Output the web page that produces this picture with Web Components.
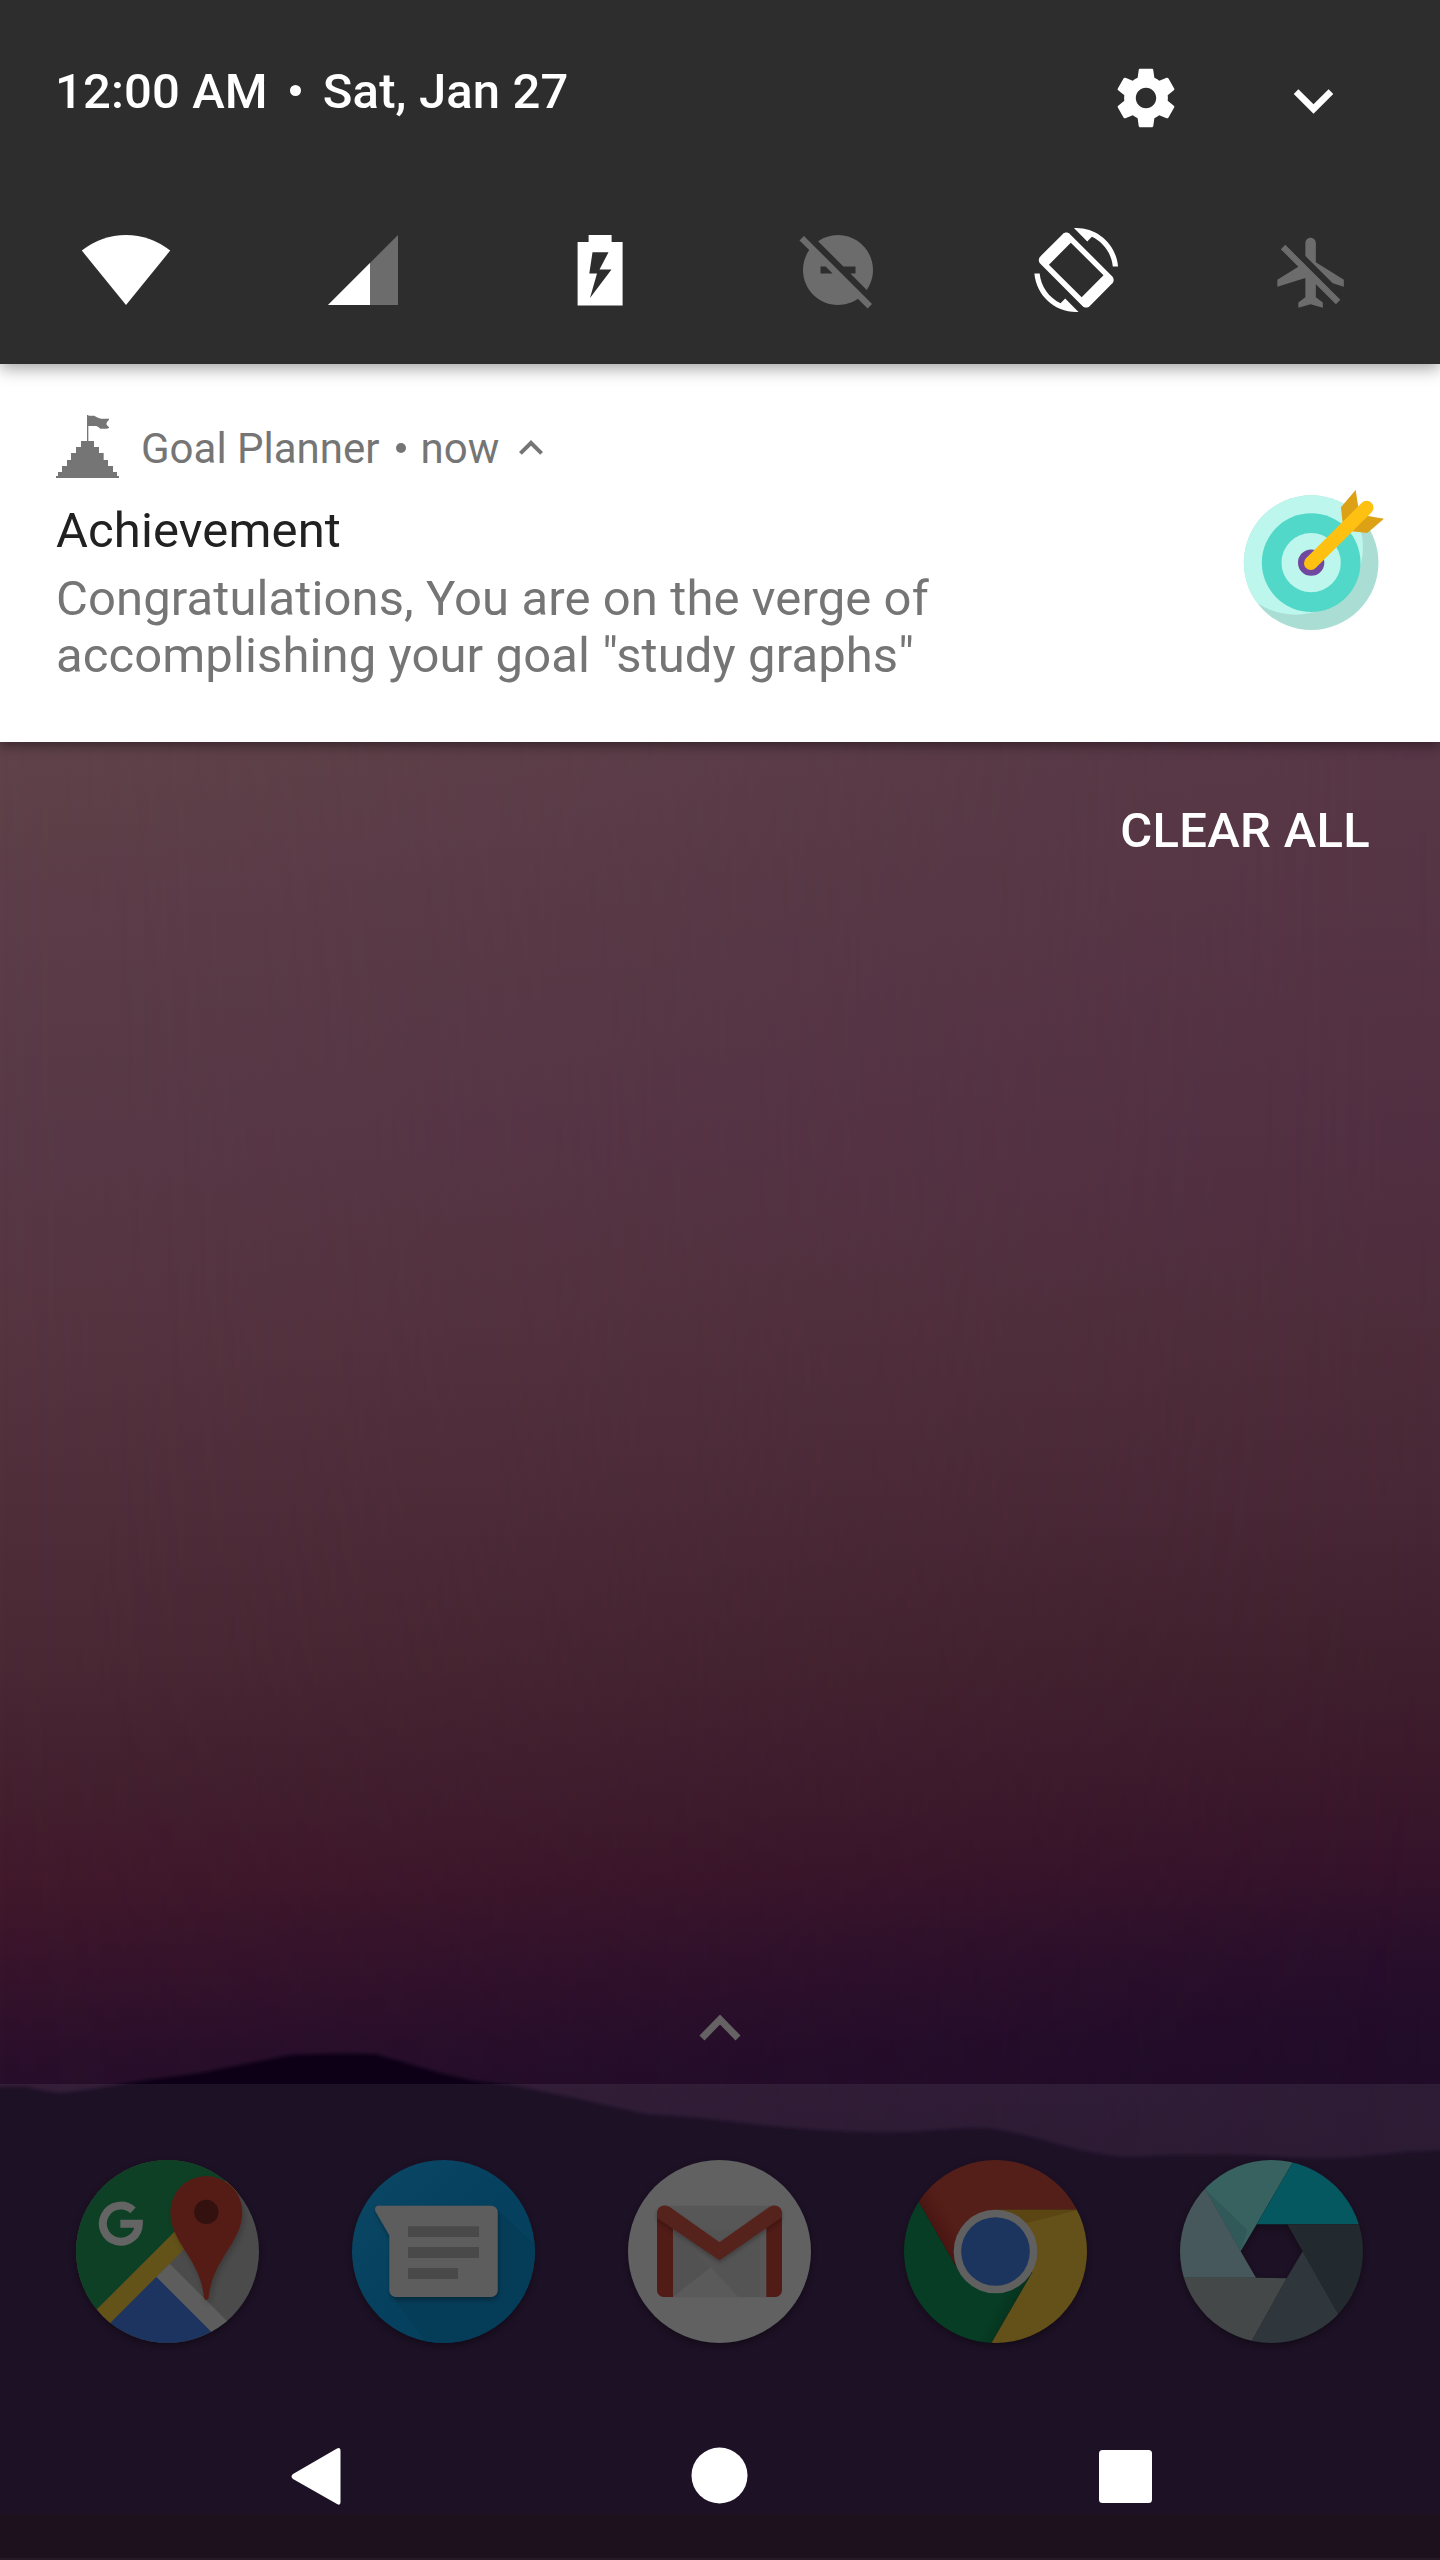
<!DOCTYPE html>
<html lang="en">
<head>
<meta charset="utf-8">
<title>Notification shade</title>
<style>
html,body{margin:0;padding:0;background:#1e1426}
body{font-family:Roboto,"Noto Sans",sans-serif}
</style>
</head>
<body>
<phone-screen>
  <status-panel time="12:00 AM" date="Sat, Jan 27"></status-panel>
  <notification-card app="Goal Planner" when="now">
    <span slot="title">Achievement</span>
    <span slot="body">Congratulations, You are on the verge of accomplishing your goal "study graphs"</span>
  </notification-card>
  <clear-button>CLEAR ALL</clear-button>
  <app-dock></app-dock>
  <nav-bar></nav-bar>
</phone-screen>
<script>
const define = (name, html, init) => {
  const t = document.createElement('template');
  t.innerHTML = html;
  customElements.define(name, class extends HTMLElement {
    constructor() {
      super();
      this.attachShadow({mode: 'open'}).appendChild(t.content.cloneNode(true));
    }
    connectedCallback() { if (init) init.call(this, this.shadowRoot); }
  });
};

// name: [viewBox, width, height, markup]
const ICONS = {
  gear: ['0 0 24 24', 70, 70, '<path fill="currentColor" d="M19.43 12.98c.04-.32.07-.64.07-.98s-.03-.66-.07-.98l2.11-1.65c.19-.15.24-.42.12-.64l-2-3.46c-.12-.22-.39-.3-.61-.22l-2.49 1c-.52-.4-1.08-.73-1.69-.98l-.38-2.65C14.46 2.18 14.25 2 14 2h-4c-.25 0-.46.18-.49.42l-.38 2.65c-.61.25-1.17.59-1.69.98l-2.49-1c-.23-.09-.49 0-.61.22l-2 3.46c-.13.22-.07.49.12.64l2.11 1.65c-.04.32-.07.65-.07.98s.03.66.07.98l-2.11 1.65c-.19.15-.24.42-.12.64l2 3.46c.12.22.39.3.61.22l2.49-1c.52.4 1.08.73 1.69.98l.38 2.65c.03.24.24.42.49.42h4c.25 0 .46-.18.49-.42l.38-2.65c.61-.25 1.17-.59 1.69-.98l2.49 1c.23.09.49 0 .61-.22l2-3.46c.12-.22.07-.49-.12-.64l-2.11-1.65zM12 15.5c-1.93 0-3.5-1.57-3.5-3.5s1.57-3.5 3.5-3.5 3.5 1.57 3.5 3.5-1.57 3.5-3.5 3.5z"/>'],
  expand: ['0 0 24 24', 79, 79, '<path fill="currentColor" d="M16.59 8.59L12 13.17 7.41 8.59 6 10l6 6 6-6z"/>'],
  collapse: ['0 0 24 24', 48, 48, '<path fill="currentColor" d="M12 8l-6 6 1.41 1.41L12 10.83l4.59 4.58L18 14z"/>'],
  wifi: ['0 0 84 84', 84, 84, '<path fill="#fff" d="M42 77L-2.2 22.6A70 70 0 0 1 86.2 22.6Z"/>'],
  signal: ['0 0 84 84', 84, 84, '<path fill="#6c6c6c" d="M77 7V77H7Z"/><path fill="#fff" d="M49 35V77H7Z"/>'],
  battery: ['0 0 84 84', 84, 84, '<path fill="#fff" fill-rule="evenodd" d="M30.600 7H53.600V14H64.600V77.500H19.600V14H30.600ZM34.500 24.300L31.300 45.500H39L32 70L53.500 41.500H41.500L50.500 24.300Z"/>'],
  dnd: ['0 0 24 24', 84, 84, '<path fill="#6c6c6c" d="M17 11v2h-1.46l4.68 4.68C21.34 16.07 22 14.11 22 12c0-5.52-4.48-10-10-10-2.11 0-4.07.66-5.68 1.78L13.54 11H17zM2.27 2.27L1 3.54l2.78 2.78C2.66 7.93 2 9.89 2 12c0 5.52 4.48 10 10 10 2.11 0 4.07-.66 5.68-1.780L20.46 23l1.27-1.27L2.27 2.27zM7 13v-2h1.46l2 2H7z"/>'],
  rotate: ['-.35 0 24 24', 84, 84, '<path fill="#fff" fill-rule="evenodd" d="M16.48 2.520c3.27 1.55 5.61 4.72 5.97 8.48h1.5C23.44 4.840 18.290 0 12 0l-.66.03 3.81 3.81 1.33-1.32zm-6.25-.77c-.59-.59-1.54-.59-2.12 0L1.750 8.110c-.59.59-.59 1.54 0 2.12l12.020 12.020c.59.59 1.54.59 2.12 0l6.36-6.36c.59-.59.59-1.54 0-2.120L10.230 1.750zM10.450 4.200L19.800 13.500L13.550 19.800L4.200 10.500ZM7.520 21.480C4.250 19.940 1.910 16.760 1.550 13H.05C.56 19.160 5.710 24 12 24l.66-.03-3.81-3.81-1.33 1.320z"/>'],
  plane: ['-.1 -.8 24 24', 84, 84, '<path fill="#6c6c6c" d="M13 9V3.500c0-.83-.67-1.500-1.500-1.500S10 2.670 10 3.500v3.680l7.830 7.830L21 16v-2l-8-5zM3 5.270l4.990 4.990L2 14v2l8-2.500V19l-2 1.500V22l3.500-1 3.500 1v-1.500L13 19v-3.730L18.730 21 20 19.730 4.270 4 3 5.270z"/>'],
  flaghill: ['48 45 189 189', 63, 63, '<path fill="#757575" d="M141 45H145V47H163L169 51L176 54L183 56H207V59L201 66L199 72L202 77L207 81V84L200 86H181L176 82L169 78H145V123H162V141H177V159H191V180H204V198H219V216H231V228H237V234H48V228H54V216H66V198H81V180H93V159H108V141H123V123H141Z"/>'],
  target: ['72 60 421 421', 140.300, 140.300, '<defs><clipPath id="r"><circle cx="273.500" cy="278" r="202"/></clipPath></defs><circle cx="273.500" cy="278" r="202" fill="#aaded4"/><circle cx="226" cy="231" r="203" fill="#bdf6ec" clip-path="url(#r)"/><circle cx="273.500" cy="278" r="148" fill="#52d8c8"/><circle cx="273.500" cy="278" r="89" fill="#bdf6ec"/><circle cx="273.500" cy="278" r="39.500" fill="#70489f"/><path fill="#dca114" d="M407 60L363 112L368 160L415 112ZM492 146L442 189L396 184L440 137Z"/><path stroke="#ffc111" stroke-width="41" stroke-linecap="round" d="M272.500 279.500L440 113"/>'],
  maps: ['78 90 549 549', 183, 183, '<defs><clipPath id="c"><circle cx="352.500" cy="364.500" r="274.500"/></clipPath><filter id="s" x="-20%" y="-20%" width="140%" height="140%"><feDropShadow dx="6" dy="10" stdDeviation="9" flood-opacity=".22"/></filter></defs><g clip-path="url(#c)"><path fill="#4b4b4b" d="M78 90H627V639H78Z"/><path fill="#0d4024" d="M78 90H590L560 119L78 601Z"/><path fill="#635319" d="M560 119V200L78 682V601Z"/><path fill="#5d5d5d" d="M359 401L640 682H560L319 441Z"/><path fill="#1c345f" d="M319 441L560 682H78Z"/><path fill="#551f19" filter="url(#s)" d="M469 138A108 108 0 0 0 361 246C361 302 392 339 422 389C449 434 458 468 462 504Q463 510 469 510Q475 510 476 504C480 468 489 434 516 389C546 339 577 302 577 246A108 108 0 0 0 469 138Z"/></g><circle cx="469" cy="246" r="36.500" fill="#32110f"/><path fill="none" stroke="#646464" stroke-width="24" d="M249 241A54 54 0 1 0 266.500 281H211"/>'],
  messages: ['906 90 549 549', 183, 183, '<defs><clipPath id="c"><circle cx="1180.500" cy="364.500" r="274.500"/></clipPath><linearGradient id="g" x1="0" y1="0" x2="1" y2="1"><stop offset="0" stop-color="#0b4865"/><stop offset=".5" stop-color="#05415f"/><stop offset="1" stop-color="#053e5b"/></linearGradient><filter id="s" x="-20%" y="-20%" width="140%" height="140%"><feDropShadow dx="2" dy="9" stdDeviation="8" flood-opacity=".3"/></filter></defs><g clip-path="url(#c)"><path fill="url(#g)" d="M906 90H1455V639H906Z"/><path fill="#053c58" d="M1340 238L1455 346V639H1130L1024 495Z"/></g><path fill="#5d5d5d" filter="url(#s)" d="M985 227H1323A20 20 0 0 1 1343 247V481A20 20 0 0 1 1323 501H1038A20 20 0 0 1 1018 481V316L976 243Q972 229 985 227Z"/><path fill="#494949" d="M1074 289H1287V321H1074ZM1074 351H1287V384H1074ZM1074 414H1224V447H1074Z"/>'],
  gmail: ['84 90 549 549', 183, 183, '<defs><filter id="s" x="-20%" y="-20%" width="140%" height="150%"><feDropShadow dx="0" dy="8" stdDeviation="7" flood-opacity=".25"/></filter></defs><circle cx="358.500" cy="364.500" r="274.500" fill="#616161"/><path fill="#575757" d="M200 227H517V502H200Z"/><path fill="#525252" d="M219 297L332 412L219 501Z"/><path fill="#515151" d="M219 297L416 501L480 501L480 300Z" opacity=".45"/><path fill="#5a5a5a" d="M219 501L332 412L416 501Z"/><path fill="#511b16" d="M171 247H219V501H191A20 20 0 0 1 171 481ZM499 247H546V481A20 20 0 0 1 526 501H499Z"/><path fill="#56201b" filter="url(#s)" d="M171 249C171 229 192 220 209 231L358.500 337L508 231C525 220 546 229 546 249V262L358.500 391L171 264Z"/>'],
  chrome: ['912 90 549 549', 183, 183, '<defs><clipPath id="c"><circle cx="1186.500" cy="364.500" r="274.500"/></clipPath><linearGradient id="r" gradientUnits="userSpaceOnUse" x1="1010" y1="340" x2="1080" y2="300"><stop offset="0" stop-color="#481410"/><stop offset="1" stop-color="#551f19"/></linearGradient><linearGradient id="e" gradientUnits="userSpaceOnUse" x1="1190" y1="520" x2="1240" y2="545"><stop offset="0" stop-color="#073d24"/><stop offset="1" stop-color="#05331d"/></linearGradient></defs><g clip-path="url(#c)"><path fill="url(#r)" d="M880 83H1480V239H1186V364L1078 427Z"/><path fill="url(#e)" d="M880 83L1078 427L1186 364L1297 427L1172 643H880Z"/><path fill="#645019" d="M1186 239H1480V643H1172L1297 427L1186 364Z"/><path fill="#5a4513" d="M1186 239H1434L1280 279L1250 300Z"/></g><circle cx="1186.500" cy="364.500" r="125.500" fill="#606060"/><circle cx="1186.500" cy="364.500" r="103" fill="#1c355f"/>'],
  camera: ['180 90 549 549', 183, 183, '<defs><clipPath id="c"><circle cx="454.500" cy="364.500" r="274.500"/></clipPath></defs><g clip-path="url(#c)"><path fill="#38625f" d="M200 80L362 364L410 283L562 22Z"/><path fill="#31595a" d="M255 177L362 364L382 300Z"/><path fill="#055860" d="M562 22L410 283H800V22Z"/><path fill="#232a2f" d="M800 283H502L548 364L713 655H800Z"/><path fill="#2f373d" d="M713 655L548 364L500 445L358 700H713Z"/><path fill="#444849" d="M358 700L500 445L408 443H100V700Z"/><path fill="#46585b" d="M100 443H408L362 364L200 80H100Z"/></g>'],
};

define('ui-icon', '<style>:host{display:block;flex:none}svg{display:block;overflow:visible}</style>', function (root) {
  const [vb, w, h, body] = ICONS[this.getAttribute('name')];
  const box = document.createElement('div');
  box.innerHTML = `<svg viewBox="${vb}" width="${w}" height="${h}" fill="none">${body}</svg>`;
  root.appendChild(box);
});

define('wall-paper', `<style>
  :host{display:block;position:absolute;inset:0;overflow:hidden;background:#0f0218}
  .sky{position:absolute;left:0;right:0;top:742px;height:1420px}
  .l{background:linear-gradient(#60434a 0,#5c3d48 150px,#583846 400px,#563541 560px,#502e3a 750px,#4a2834 920px,#431f2e 1060px,#41192b 1140px,#37132b 1230px,#2b0f2b 1310px,#270e2a 1345px,#200b26 1420px)}
  .r{background:linear-gradient(#573646 0,#553444 150px,#512f42 400px,#4d2c3a 590px,#482736 750px,#3f1f2d 920px,#3a182b 1040px,#34122a 1130px,#270e2b 1220px,#210c29 1300px,#1e0b26 1420px);-webkit-mask:linear-gradient(to right,transparent,#000);mask:linear-gradient(to right,transparent,#000)}
  svg{position:absolute;left:0;top:0}
</style>
<div class="sky l"></div><div class="sky r"></div>
<svg width="1440" height="2560" viewBox="0 0 1440 2560">
  <defs><linearGradient id="m" gradientUnits="userSpaceOnUse" x1="0" y1="2054" x2="0" y2="2560"><stop offset="0" stop-color="#0f0018"/><stop offset=".1" stop-color="#0f0418"/><stop offset=".5" stop-color="#0e0417"/><stop offset="1" stop-color="#0c0510"/></linearGradient>
  <filter id="b" x="-2%" y="-2%" width="104%" height="104%"><feGaussianBlur stdDeviation="1.500"/></filter></defs>
  <path filter="url(#b)" fill="url(#m)" d="M-10 2087L28 2087Q45 2092 60 2093Q75 2092 105 2087L140 2081L200 2073L240 2065L290 2055Q330 2053 375 2054L400 2061L440 2073L475 2081L510 2085L570 2097L645 2114L700 2118L760 2125Q850 2134 910 2132Q960 2128 985 2128Q1015 2131 1060 2145Q1100 2156 1130 2157L1170 2155L1250 2155Q1300 2159 1340 2158Q1380 2155 1405 2152L1450 2150V2580H-10Z"/>
</svg>`);

define('phone-screen', `<style>
  :host{display:flex;flex-direction:column;position:relative;width:1440px;height:2560px;overflow:hidden;isolation:isolate}
  wall-paper{z-index:-1}
</style><wall-paper></wall-paper><slot></slot>`);

define('status-panel', `<style>
  :host{display:flex;flex-direction:column;box-sizing:border-box;height:364px;background:#2d2d2d;color:#fff;z-index:2;box-shadow:0 4px 16px rgba(0,0,0,.38)}
  .top{display:flex;align-items:flex-start;padding:0 87px 0 55px;height:228px;box-sizing:border-box}
  .text{display:flex;align-items:center;margin-top:63px;font:500 49px/57px Roboto,sans-serif;letter-spacing:.12px;white-space:pre}
  .dot{width:11px;height:11px;border-radius:50%;background:#fff;margin:-2px 22px 0 22px}
  .grow{flex:1}
  .gear{margin:63px 93px 0 0}
  .chev{margin-top:61px}
  .row{display:flex;justify-content:space-between;padding:0 86px 0 84px}
</style>
<div class="top"><div class="text"><span id="t"></span><i class="dot"></i><span id="d"></span></div><div class="grow"></div>
<ui-icon class="gear" name="gear"></ui-icon><ui-icon class="chev" name="expand"></ui-icon></div>
<div class="row"><ui-icon name="wifi"></ui-icon><ui-icon name="signal"></ui-icon><ui-icon name="battery"></ui-icon><ui-icon name="dnd"></ui-icon><ui-icon name="rotate"></ui-icon><ui-icon name="plane"></ui-icon></div>`, function (root) {
  root.getElementById('t').textContent = this.getAttribute('time');
  root.getElementById('d').textContent = this.getAttribute('date');
});

define('notification-card', `<style>
  :host{display:flex;justify-content:space-between;align-items:flex-start;box-sizing:border-box;height:378px;padding:51px 55.700px 0 56px;background:#fff;color:#757575;z-index:1;box-shadow:0 3px 12px rgba(0,0,0,.45)}
  .head{display:flex;align-items:center;height:63px}
  .meta{display:flex;align-items:center;margin:3px 0 0 22px;font-size:42px;line-height:49px}
  .dot{width:10px;height:10px;border-radius:50%;background:#757575;margin:0 15px 0 16px}
  .meta ui-icon{margin-left:8px}
  .title{margin-top:24px;font-size:49px;line-height:57px;color:#212121;letter-spacing:.12px}
  .body{margin-top:11px;width:960px;font-size:49px;line-height:57px;letter-spacing:.1px}
  .pic{margin-top:75px}
</style>
<div><div class="head"><ui-icon name="flaghill"></ui-icon><div class="meta"><span id="a"></span><i class="dot"></i><span id="w"></span><ui-icon name="collapse"></ui-icon></div></div>
<div class="title"><slot name="title"></slot></div><div class="body"><slot name="body"></slot></div></div>
<ui-icon class="pic" name="target"></ui-icon>`, function (root) {
  root.getElementById('a').textContent = this.getAttribute('app');
  root.getElementById('w').textContent = this.getAttribute('when');
});

define('clear-button', `<style>
  :host{display:flex;justify-content:flex-end;padding:60px 70px 0 0;color:#fff;font:500 49px/57px Roboto,sans-serif;letter-spacing:.3px;flex:1}
</style><slot></slot>`);

define('app-dock', `<style>
  :host{display:flex;flex-direction:column;height:394px}
  .handle{display:flex;justify-content:center;height:76px}
  .apps{display:flex;justify-content:space-between;align-items:flex-start;box-sizing:border-box;height:318px;padding:76px 77px 0 76px;background:rgba(255,255,255,.067)}
  .apps ui-icon{filter:drop-shadow(0 3px 3px rgba(0,0,0,.35))}
  svg{margin-top:4px}
</style>
<div class="handle"><svg width="44" height="30" viewBox="0 0 44 30"><path d="M4 26L22 7.500L40 26" fill="none" stroke="#646262" stroke-width="7"/></svg></div>
<div class="apps"><ui-icon name="maps"></ui-icon><ui-icon name="messages"></ui-icon><ui-icon name="gmail"></ui-icon><ui-icon name="chrome"></ui-icon><ui-icon name="camera"></ui-icon></div>`);

define('nav-bar', `<style>
  :host{display:flex;box-sizing:border-box;height:158px;padding:45px 288px 0 291px;justify-content:space-between;align-items:flex-start;background:rgba(255,255,255,.067);border-bottom:2px solid rgba(255,255,255,.04)}
  svg{display:block}
</style>
<svg width="50" height="60" viewBox="0 0 50 60"><path fill="#fff" d="M46 1.500Q49.500 0 49.500 4V55Q49.500 59 46 57L2 32Q-1 29.500 2 27Z"/></svg>
<svg width="58" height="58" viewBox="0 0 58 58"><circle cx="28.500" cy="28.500" r="28" fill="#fff"/></svg>
<svg width="53" height="60" viewBox="0 0 53 60"><rect y="3" width="53" height="53" rx="3.500" fill="#fff"/></svg>`);
</script>
</body>
</html>
